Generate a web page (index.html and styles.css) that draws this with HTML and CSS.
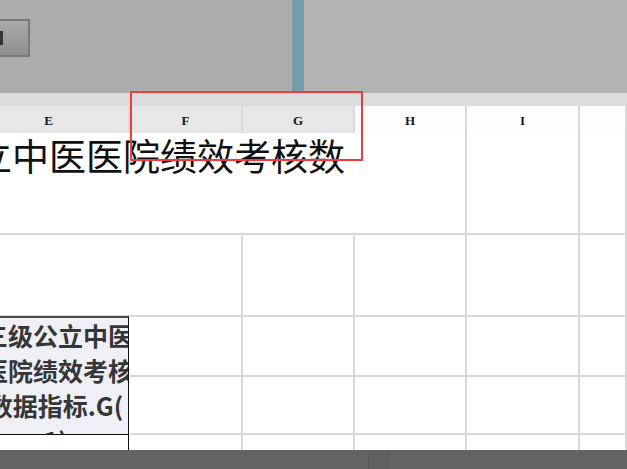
FILE: index.html
```html
<!DOCTYPE html>
<html lang="zh">
<head>
<meta charset="utf-8">
<title>Sheet</title>
<link rel="stylesheet" href="styles.css">
</head>
<body>
<div class="app">
  <div class="top">
    <div class="pane-left">
      <div class="btn"><span class="btn-glyph"></span></div>
    </div>
    <div class="splitter"></div>
    <div class="pane-right"></div>
  </div>
  <div class="strip"></div>
  <div class="sheet">
    <div class="colhead">
      <div class="hcell sel">E</div>
      <div class="hcell sel">F</div>
      <div class="hcell sel">G</div>
      <div class="hcell">H</div>
      <div class="hcell">I</div>
      <div class="hcell"></div>
    </div>
    <div class="grid">
      <div class="cell title">三级公立中医医院绩效考核数</div>
      <div class="cell"></div>
      <div class="cell"></div>

      <div class="cell span2"></div>
      <div class="cell"></div>
      <div class="cell"></div>
      <div class="cell"></div>
      <div class="cell"></div>

      <div class="cell dark">
        <div class="dline">三级公立中医</div>
        <div class="dline">医院绩效考核</div>
        <div class="dline">数据指标.G(</div>
        <div class="dline">1)</div>
      </div>
      <div class="cell"></div>
      <div class="cell"></div>
      <div class="cell"></div>
      <div class="cell"></div>
      <div class="cell"></div>

      <div class="cell"></div>
      <div class="cell"></div>
      <div class="cell"></div>
      <div class="cell"></div>
      <div class="cell"></div>

      <div class="cell darkedge"></div>
      <div class="cell"></div>
      <div class="cell"></div>
      <div class="cell"></div>
      <div class="cell"></div>
      <div class="cell"></div>
    </div>
  </div>
  <div class="statusbar"><div class="seg"></div></div>
  <div class="selection"></div>
</div>
</body>
</html>
```

FILE: styles.css
```css
* { box-sizing: border-box; }
html, body { margin: 0; padding: 0; }
body {
  width: 627px;
  height: 469px;
  overflow: hidden;
  background: #ffffff;
  font-family: "Noto Sans CJK SC", "Noto Sans", sans-serif;
}
.app {
  position: relative;
  width: 627px;
  height: 469px;
  overflow: hidden;
  display: flex;
  flex-direction: column;
}
.top {
  height: 93px;
  display: flex;
  flex: none;
}
.pane-left {
  width: 292px;
  background: #abacae;
  padding-top: 19px;
}
.btn {
  width: 30px;
  height: 38px;
  border: 2px solid #7a7a7a;
  border-left: none;
  background: linear-gradient(#a9a9a9, #8f8f8f);
  padding-top: 10px;
}
.btn-glyph {
  display: block;
  width: 3px;
  height: 14px;
  background: #333333;
}
.splitter {
  width: 12px;
  background: #6f9fa9;
  border-left: 1px solid #8c9a9d;
}
.pane-right {
  flex: 1;
  background: #b3b3b3;
}
.strip {
  height: 13px;
  flex: none;
  background: #dcdcde;
}
.sheet {
  flex: none;
  height: 344px;
  width: 658px;
  margin-left: -31px;
  overflow: hidden;
  background: #ffffff;
}
.colhead, .grid {
  display: grid;
  grid-template-columns: 161px 113px 112px 112px 113px 47px;
}
.colhead {
  height: 25px;
  border-bottom: 1px solid #d3d3d3;
}
.hcell {
  background: #fdfdfd;
  border-right: 2px solid #dadada;
  font-family: "Liberation Serif", "DejaVu Serif", serif;
  font-size: 13px;
  font-weight: bold;
  color: #1a1a1a;
  text-align: center;
  line-height: 24px;
  padding-top: 3px;
}
.hcell.sel { background: #e7e7e7; }
.grid {
  grid-template-rows: 104px 82px 60px 58px 60px;
}
.cell {
  border-right: 2px solid #d9d9d9;
  border-bottom: 2px solid #d9d9d9;
  overflow: hidden;
}
.title {
  grid-column: span 4;
  font-size: 37px;
  line-height: 37px;
  padding-top: 6px;
  white-space: nowrap;
  text-indent: -105px;
  color: #111111;
}
.span2 { grid-column: span 2; }
.dark {
  grid-row: span 2;
  background: #eef0f5;
  border-top: 2px solid #4a4a4a;
  border-right: 1px solid #111111;
  border-bottom: 1px solid #111111;
  margin-right: 1px;
  margin-top: -1px;
  padding-left: 14px;
  font-size: 25px;
  font-weight: bold;
  line-height: 35px;
  color: #363636;
  text-align: center;
}
.dline { white-space: nowrap; }
.darkedge {
  border-right: 1px solid #111111;
  margin-right: 1px;
}
.statusbar {
  flex: none;
  height: 19px;
  background: #636363;
  padding-left: 368px;
}
.seg {
  width: 21px;
  height: 19px;
  background: #606060;
  border-left: 1px solid #5a5a5a;
  border-right: 1px solid #5a5a5a;
}
.selection {
  position: absolute;
  left: 130px;
  top: 91px;
  width: 233px;
  height: 70px;
  border: 2px solid #f03b3c;
}
```
